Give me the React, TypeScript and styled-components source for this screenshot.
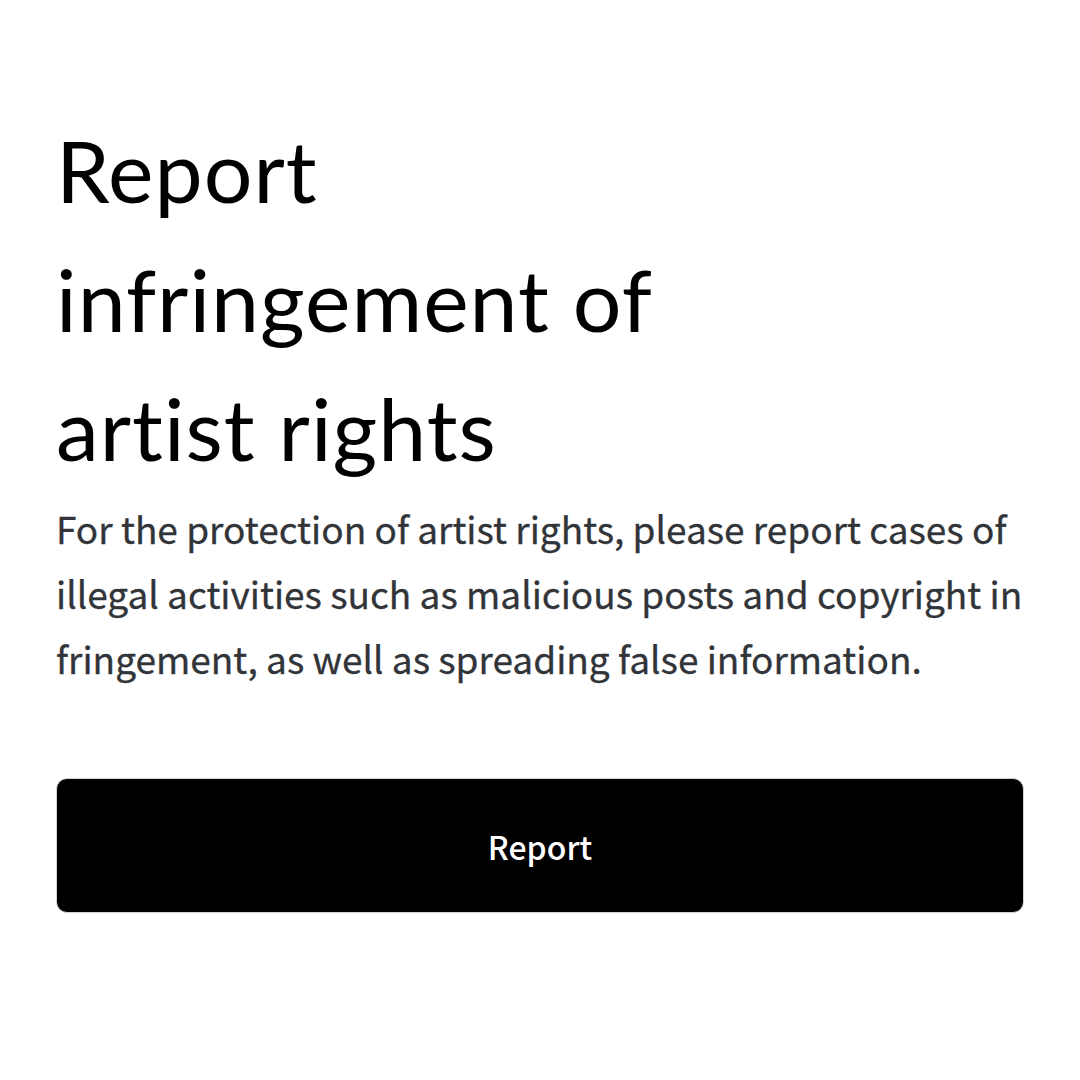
import React from 'react'
import styled, { createGlobalStyle } from 'styled-components'

const GlobalStyle = createGlobalStyle`
  html, body {
    margin: 0;
    padding: 0;
    background: #ffffff;
  }
`

const Page = styled.main`
  box-sizing: border-box;
  width: 1080px;
  min-height: 1080px;
  padding: 105px 56px 0;
  display: flex;
  flex-direction: column;
`

const Title = styled.h1`
  margin: 0;
  font-family: 'Lato', 'Noto Sans', sans-serif;
  font-weight: 400;
  font-size: 86px;
  line-height: 129px;
  letter-spacing: 1px;
  color: #000;
`

const Description = styled.p`
  margin: 4px 0 0;
  font-family: 'Noto Sans CJK KR', 'Noto Sans', sans-serif;
  font-size: 37px;
  line-height: 65px;
  color: #313439;
  white-space: nowrap;
  -webkit-text-stroke: 0.3px #313439;
`

const ReportButton = styled.button`
  box-sizing: border-box;
  margin-top: 87px;
  width: 100%;
  height: 135px;
  border: 1.5px solid #d4d4d4;
  border-radius: 11px;
  background: #000;
  color: #fff;
  font-family: 'Noto Sans CJK KR', 'Noto Sans', sans-serif;
  font-size: 32px;
  font-weight: 500;
  cursor: pointer;
`

export default function App() {
  return (
    <>
      <GlobalStyle />
      <Page>
        <Title>
          Report
          <br />
          infringement of
          <br />
          artist rights
        </Title>
        <Description>
          For the protection of artist rights, please report cases of
          <br />
          illegal activities such as malicious posts and copyright in
          <br />
          fringement, as well as spreading false information.
        </Description>
        <ReportButton type="button">Report</ReportButton>
      </Page>
    </>
  )
}
